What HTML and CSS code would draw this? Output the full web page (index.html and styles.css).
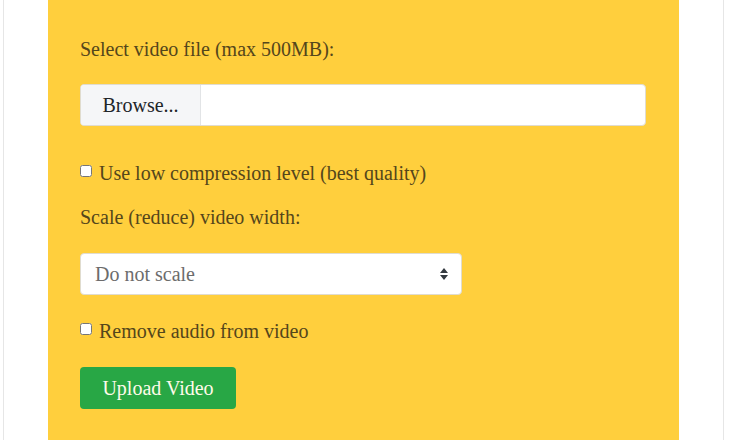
FILE: index.html
```html
<!DOCTYPE html>
<html lang="en">
<head>
    <meta charset="UTF-8">
    <meta name="viewport" content="width=device-width, initial-scale=1.0">
    <title>Video Compressor</title>
    <link rel="stylesheet" href="styles.css">
</head>
<body>
    <div class="page">
        <form class="upload-box">
            <label class="field-label">Select video file (max 500MB):</label>
            <div class="file-input">
                <span class="file-button">Browse...</span>
                <span class="file-name"></span>
            </div>

            <label class="check-row first-check">
                <input type="checkbox">
                <span>Use low compression level (best quality)</span>
            </label>

            <label class="field-label scale-label">Scale (reduce) video width:</label>
            <div class="select-wrap">
                <select class="scale-select">
                    <option>Do not scale</option>
                </select>
                <svg class="select-arrow" width="8" height="12" viewBox="0 0 8 12">
                    <path d="M4 0 L8 5 H0 Z M4 12 L0 7 H8 Z" fill="#343a40"/>
                </svg>
            </div>

            <label class="check-row second-check">
                <input type="checkbox">
                <span>Remove audio from video</span>
            </label>

            <button type="button" class="upload-btn">Upload Video</button>
        </form>
    </div>
</body>
</html>
```

FILE: styles.css
```css
:root {
    --yellow: #ffcf3d;
    --text: #54461b;
    --green: #28a745;
}

body {
    margin: 0;
    background: #ffffff;
    font-family: 'Liberation Serif', serif;
    font-size: 20px;
    color: var(--text);
}

.page {
    margin: 0 6px 0 3px;
    padding: 0 44px;
    border-left: 1px solid #e6e6e6;
    border-right: 1px solid #e6e6e6;
    min-height: 440px;
}

.upload-box {
    background: var(--yellow);
    padding: 36px 33px 40px 32px;
    display: flex;
    flex-direction: column;
    align-items: flex-start;
    min-height: 440px;
    box-sizing: border-box;
}

.field-label {
    line-height: 26px;
    display: block;
}

.file-input {
    margin-top: 22px;
    align-self: stretch;
    display: flex;
    height: 42px;
    box-sizing: border-box;
    border: 1px solid #e0dccf;
    border-radius: 4px;
    background: #ffffff;
    overflow: hidden;
}

.file-button {
    width: 119px;
    display: flex;
    align-items: center;
    justify-content: center;
    background: #f5f6f8;
    border-right: 1px solid #e2e4e6;
    color: #212529;
}

.file-name {
    flex: 1;
}

.check-row {
    display: flex;
    align-items: center;
    line-height: 26px;
}

.check-row input {
    margin: 0 7px 0 0;
    width: 12px;
    height: 12px;
    position: relative;
    top: -2px;
}

.first-check {
    margin-top: 34px;
}

.scale-label {
    margin-top: 18px;
}

.select-wrap {
    position: relative;
    margin-top: 23px;
    width: 382px;
}

.scale-select {
    appearance: none;
    -webkit-appearance: none;
    width: 100%;
    height: 42px;
    border: 1px solid #e0dccf;
    border-radius: 4px;
    background: #ffffff;
    padding: 0 14px;
    font-family: 'Liberation Serif', serif;
    font-size: 20px;
    color: #6c6c6c;
}

.select-arrow {
    position: absolute;
    right: 14px;
    top: 15px;
}

.second-check {
    margin-top: 23px;
}

.upload-btn {
    margin-top: 23px;
    width: 156px;
    height: 42px;
    border: none;
    border-radius: 4px;
    background: var(--green);
    color: #fffbea;
    font-family: 'Liberation Serif', serif;
    font-size: 20px;
}
```
